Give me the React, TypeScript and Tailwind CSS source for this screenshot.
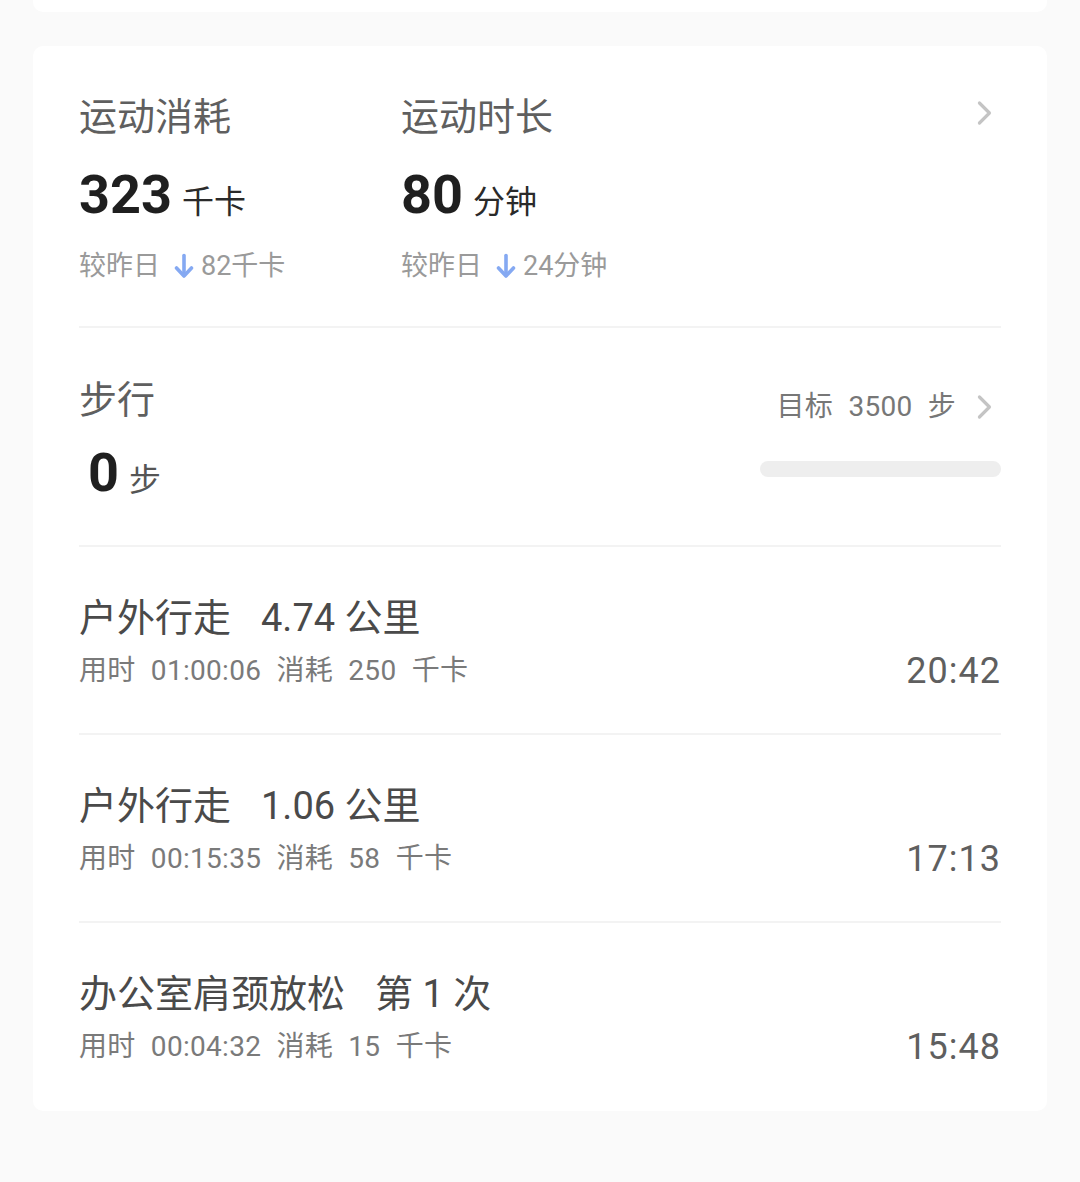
const font = { fontFamily: 'Roboto, "Noto Sans CJK SC", sans-serif' };

function Chevron({ size = 26 }: { size?: number }) {
  return (
    <svg width={size * 0.65} height={size} viewBox="0 0 16 26" fill="none">
      <path d="M3 3 L13 13 L3 23" stroke="#c4c4c4" strokeWidth="3.2" strokeLinecap="round" strokeLinejoin="round" />
    </svg>
  );
}

function DownArrow() {
  return (
    <svg width="20" height="26" viewBox="0 0 20 26" fill="none" className="mr-[7px]">
      <path d="M10 2.5 L10 22" stroke="#85a9f2" strokeWidth="3.6" strokeLinecap="round" />
      <path d="M2.5 15 L10 23 L17.5 15" stroke="#85a9f2" strokeWidth="3.6" strokeLinecap="round" strokeLinejoin="round" />
    </svg>
  );
}

function Stat({ title, value, unit, diff }: { title: string; value: string; unit: string; diff: string }) {
  return (
    <div className="w-[322px] flex flex-col">
      <div className="text-[38px] leading-[54px] text-[#5f5f5f]">{title}</div>
      <div className="mt-[21px] flex items-baseline h-[60px]">
        <span className="text-[54px] leading-[60px] font-bold text-[#1f1f1f]">{value}</span>
        <span className="ml-[10px] text-[32px] text-[#2a2a2a]">{unit}</span>
      </div>
      <div className="mt-[21px] flex items-center h-[40px] text-[27px] text-[#9a9a9a]">
        <span className="mr-[14px]">较昨日</span>
        <DownArrow />
        <span>{diff}</span>
      </div>
    </div>
  );
}

type Rec = { name: string; amount: string; sub: string; time: string };

const records: Rec[] = [
  { name: "户外行走", amount: "4.74 公里", sub: "用时 01:00:06 消耗 250 千卡", time: "20:42" },
  { name: "户外行走", amount: "1.06 公里", sub: "用时 00:15:35 消耗 58 千卡", time: "17:13" },
  { name: "办公室肩颈放松", amount: "第 1 次", sub: "用时 00:04:32 消耗 15 千卡", time: "15:48" },
];

function Record({ r, last }: { r: Rec; last: boolean }) {
  return (
    <div className={last ? "h-[188px] pt-[44px]" : "h-[188px] pt-[44px] border-b-2 border-[#f3f3f3]"}>
      <div className="text-[38px] leading-[54px] text-[#4a4a4a] flex">
        <span>{r.name}</span>
        <span className="ml-[30px]">{r.amount}</span>
      </div>
      <div className="flex items-center justify-between h-[52px]">
        <span className="text-[28px] text-[#7a7a7a] [word-spacing:8px] tracking-[0.3px]">{r.sub}</span>
        <span className="text-[36px] text-[#5f5f5f] tracking-[1px]">{r.time}</span>
      </div>
    </div>
  );
}

export default function App() {
  return (
    <div className="bg-[#fafafa] min-h-[1182px] w-full px-[33px]" style={font}>
      <div className="h-[12px] bg-white rounded-b-[10px]" />

      <div className="mt-[34px] bg-white rounded-[10px] px-[46px]">
        <div className="h-[282px] pt-[44px] border-b-2 border-[#f3f3f3] flex relative">
          <div className="flex">
            <Stat title="运动消耗" value="323" unit="千卡" diff="82千卡" />
            <Stat title="运动时长" value="80" unit="分钟" diff="24分钟" />
          </div>
          <div className="absolute right-[8px] top-[54px]">
            <Chevron />
          </div>
        </div>

        <div className="h-[219px] border-b-2 border-[#f3f3f3] flex justify-between">
          <div className="pt-[45px]">
            <div className="text-[38px] leading-[54px] text-[#5f5f5f]">步行</div>
            <div className="mt-[16px] ml-[9px] flex items-baseline">
              <span className="text-[54px] leading-[60px] font-bold text-[#1f1f1f]">0</span>
              <span className="ml-[10px] text-[32px] text-[#555]">步</span>
            </div>
          </div>
          <div className="pt-[59px] w-[241px] flex flex-col items-end">
            <div className="flex items-center h-[40px]">
              <span className="text-[28px] text-[#777] [word-spacing:8px] tracking-[0.3px] whitespace-nowrap">目标 3500 步</span>
              <span className="ml-[20px] mr-[8px] flex">
                <Chevron />
              </span>
            </div>
            <div className="mt-[34px] w-full h-[16px] rounded-full bg-[#eeeeee]" />
          </div>
        </div>

        {records.map((r, i) => (
          <Record key={i} r={r} last={i === records.length - 1} />
        ))}
      </div>
    </div>
  );
}
